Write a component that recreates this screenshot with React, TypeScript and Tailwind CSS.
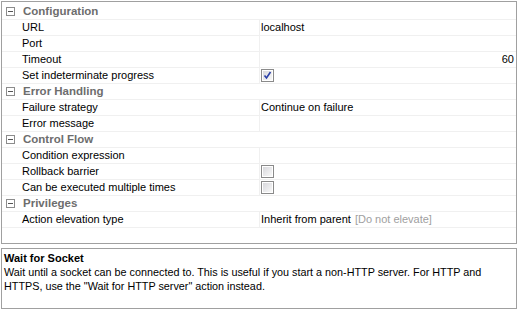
type Row =
  | { kind: "head"; label: string }
  | { kind: "item"; label: string; value?: string; right?: boolean; check?: boolean; checked?: boolean; hint?: string };

const rows: Row[] = [
  { kind: "head", label: "Configuration" },
  { kind: "item", label: "URL", value: "localhost" },
  { kind: "item", label: "Port" },
  { kind: "item", label: "Timeout", value: "60", right: true },
  { kind: "item", label: "Set indeterminate progress", check: true, checked: true },
  { kind: "head", label: "Error Handling" },
  { kind: "item", label: "Failure strategy", value: "Continue on failure" },
  { kind: "item", label: "Error message" },
  { kind: "head", label: "Control Flow" },
  { kind: "item", label: "Condition expression" },
  { kind: "item", label: "Rollback barrier", check: true },
  { kind: "item", label: "Can be executed multiple times", check: true },
  { kind: "head", label: "Privileges" },
  { kind: "item", label: "Action elevation type", value: "Inherit from parent", hint: "[Do not elevate]" },
];

function Minus() {
  return (
    <svg width="9" height="9" viewBox="0 0 9 9" className="shrink-0">
      <rect x="0.5" y="0.5" width="8" height="8" fill="#fff" stroke="#8c8c8c" />
      <line x1="2" y1="4.5" x2="7" y2="4.5" stroke="#555" />
    </svg>
  );
}

function Check({ on }: { on?: boolean }) {
  return (
    <svg width="13" height="13" viewBox="0 0 13 13">
      <defs>
        <linearGradient id={on ? "g1" : "g2"} x1="0" y1="0" x2="1" y2="1">
          <stop offset="0" stopColor="#d8d8dc" />
          <stop offset="1" stopColor="#f8f8f8" />
        </linearGradient>
      </defs>
      <rect x="0.5" y="0.5" width="12" height="12" fill="#fff" stroke="#8a8a8a" />
      <rect x="2" y="2" width="9" height="9" fill={`url(#${on ? "g1" : "g2"})`} />
      {on && <path d="M3.5 6.5 L5.5 9 L9.5 3" fill="none" stroke="#2a3fa8" strokeWidth="1.6" />}
    </svg>
  );
}

export default function App() {
  return (
    <div
      className="w-[522px] h-[312px] bg-white text-[11px] text-black overflow-hidden pl-[1px] pt-[1px]"
      style={{ fontFamily: '"Liberation Sans", Arial, sans-serif' }}
    >
      <div className="w-[516px] h-[243px] border border-[#a0a0a0] pt-[2px]">
        {rows.map((r, i) =>
          r.kind === "head" ? (
            <div key={i} className="h-4 flex items-center gap-[8px] pl-[4px] border-b border-[#f0f0f0]">
              <Minus />
              <span className="font-bold text-[#6d6d6d] text-[11.5px]">{r.label}</span>
            </div>
          ) : (
            <div key={i} className="h-4 flex border-b border-[#f0f0f0]">
              <div className="w-[258px] pl-[20px] flex items-center border-r border-[#f0f0f0]">{r.label}</div>
              <div className={`flex-1 flex items-center pl-[1px] pr-[2px] ${r.right ? "justify-end" : ""}`}>
                {r.check ? (
                  <Check on={r.checked} />
                ) : (
                  <>
                    {r.value}
                    {r.hint && <span className="text-[#a0a0a0] ml-[4px]">{r.hint}</span>}
                  </>
                )}
              </div>
            </div>
          )
        )}
      </div>
      <div className="mt-[4px] w-[516px] h-[61px] border border-[#a0a0a0] px-[2px] pt-[2px] leading-[14px] text-[10.8px]">
        <div className="font-bold text-[11px]">Wait for Socket</div>
        <div>
          Wait until a socket can be connected to. This is useful if you start a non-HTTP server. For HTTP and
          HTTPS, use the "Wait for HTTP server" action instead.
        </div>
      </div>
    </div>
  );
}
